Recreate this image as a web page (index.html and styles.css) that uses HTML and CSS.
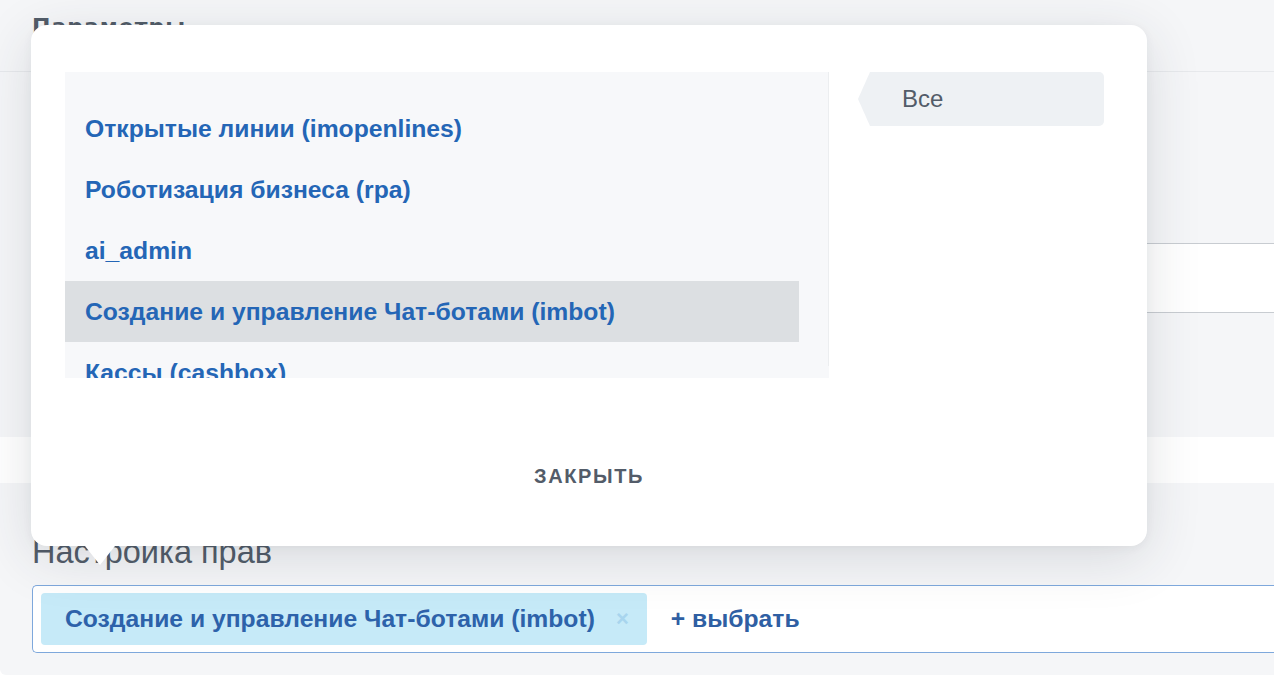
FILE: index.html
```html
<!DOCTYPE html>
<html lang="ru">
<head>
<meta charset="utf-8">
<title>Настройка прав</title>
<link rel="stylesheet" href="styles.css">
</head>
<body>
<div class="page">
  <section class="sec-params">
    <div class="sec-head"><h2 class="sec-title">Параметры</h2></div>
    <div class="sec-body">
      <div class="field"></div>
    </div>
  </section>
  <div class="gap"></div>
  <section class="sec-rights">
    <h2 class="rights-title">Настройка прав</h2>
    <div class="tag-input">
      <span class="tag"><span class="tag-text">Создание и управление Чат-ботами (imbot)</span><span class="tag-x">×</span></span>
      <span class="add">+ выбрать</span>
    </div>
  </section>

  <div class="modal">
    <div class="modal-body">
      <div class="list">
        <div class="item">Открытые линии (imopenlines)</div>
        <div class="item">Роботизация бизнеса (rpa)</div>
        <div class="item">ai_admin</div>
        <div class="item item-active">Создание и управление Чат-ботами (imbot)</div>
        <div class="item">Кассы (cashbox)</div>
      </div>
      <div class="tabs">
        <div class="tab">Все</div>
      </div>
    </div>
    <div class="modal-foot">
      <span class="close-btn">Закрыть</span>
    </div>
  </div>
</div>
</body>
</html>
```
FILE: styles.css
```css
* { box-sizing: border-box; }
html, body { margin: 0; padding: 0; }
body {
  background: #ffffff;
  font-family: "Liberation Sans", Arial, sans-serif;
  overflow: hidden;
  width: 1274px;
  height: 688px;
}
.page {
  position: relative;
  width: 1274px;
  height: 688px;
}
.sec-params { background: #f5f6f8; }
.sec-head {
  height: 72px;
  padding: 14px 0 0 32px;
  border-bottom: 1px solid #e7e9ec;
}
.sec-title {
  margin: 0;
  font-family: "DejaVu Sans", "Liberation Sans", sans-serif;
  font-size: 22px;
  line-height: 26px;
  letter-spacing: 1px;
  font-weight: 700;
  color: #525c69;
}
.sec-body {
  padding: 171px 0 124px 32px;
}
.field {
  height: 70px;
  background: #ffffff;
  border-top: 1px solid #c8ccd1;
  border-bottom: 1px solid #c8ccd1;
}
.gap { height: 46px; background: #ffffff; }
.sec-rights {
  background: #f5f6f8;
  height: 192px;
  padding: 50px 0 0 32px;
  border-radius: 0 0 0 6px;
}
.rights-title {
  margin: 0;
  font-size: 32.5px;
  line-height: 38px;
  font-weight: 400;
  color: #525c69;
}
.tag-input {
  margin-top: 14px;
  height: 68px;
  background: #ffffff;
  border: 1px solid #7ea8dc;
  border-right: none;
  border-radius: 5px 0 0 5px;
  padding: 0 8px;
  display: flex;
  align-items: center;
}
.tag {
  height: 52px;
  background: #c6eaf8;
  border-radius: 4px;
  padding: 0 18px 0 24px;
  display: flex;
  align-items: center;
}
.tag-text {
  font-size: 24.7px;
  font-weight: 700;
  color: #2d62aa;
}
.tag-x {
  margin-left: 21px;
  font-size: 22px;
  font-weight: 700;
  color: #a8d5ee;
}
.add {
  margin-left: 24px;
  font-size: 24.7px;
  font-weight: 700;
  color: #2f5fa3;
}

/* modal */
.modal {
  position: absolute;
  left: 31px;
  top: 25px;
  width: 1116px;
  height: 521px;
  background: #ffffff;
  border-radius: 16px;
  box-shadow: 0 12px 55px rgba(40, 50, 65, 0.14), 0 2px 10px rgba(40, 50, 65, 0.05);
  padding: 47px 43px 0 34px;
}
.modal::after {
  content: "";
  position: absolute;
  left: 54px;
  bottom: -19px;
  border-left: 15px solid transparent;
  border-right: 15px solid transparent;
  border-top: 19px solid #ffffff;
}
.modal-body {
  display: flex;
  align-items: flex-start;
}
.list {
  width: 764px;
  height: 306px;
  overflow: hidden;
  padding: 26px 30px 0 0;
  background: linear-gradient(#eceef0, #eceef0) right top / 1px 294px no-repeat, #f7f8fa;
}
.item {
  height: 61px;
  display: flex;
  align-items: center;
  padding-left: 20px;
  font-size: 24.7px;
  font-weight: 700;
  color: #2466b6;
  white-space: nowrap;
}
.item-active { background: #dcdfe2; }
.tabs {
  margin-left: 29px;
  width: 246px;
}
.tab {
  height: 54px;
  line-height: 54px;
  padding-left: 44px;
  background: #eef1f4;
  border-radius: 0 5px 5px 0;
  clip-path: polygon(12px 0, 100% 0, 100% 100%, 12px 100%, 0 50%);
  font-size: 24px;
  color: #535c69;
}
.modal-foot {
  margin-top: 86px;
  text-align: center;
  margin-right: -9px;
}
.close-btn {
  font-size: 20px;
  line-height: 24px;
  font-weight: 700;
  letter-spacing: 1.6px;
  text-transform: uppercase;
  color: #535c69;
}
```
